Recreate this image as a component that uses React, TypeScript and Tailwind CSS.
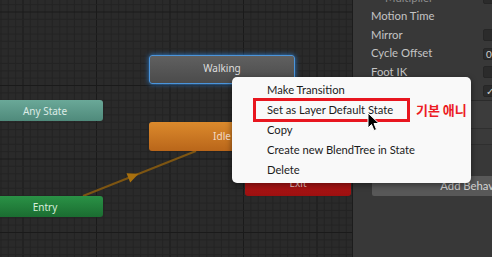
const MINOR = 7.35;

function Grid() {
  const v: JSX.Element[] = [];
  const h: JSX.Element[] = [];
  for (let i = -4; i < 48; i++) {
    const x = 23 + i * MINOR;
    v.push(
      <line key={"v" + i} x1={x} y1={0} x2={x} y2={257} stroke={i % 10 === 0 ? "#1a1a1a" : "#242424"} strokeWidth={1} />
    );
  }
  for (let i = -2; i < 36; i++) {
    const y = 12 + i * MINOR;
    h.push(
      <line key={"h" + i} x1={0} y1={y} x2={353} y2={y} stroke={i % 10 === 0 ? "#1a1a1a" : "#242424"} strokeWidth={1} />
    );
  }
  return (
    <svg className="absolute inset-0" width="353" height="257">
      <rect width="353" height="257" fill="#2a2a2a" />
      {v}
      {h}
      {/* Entry -> Idle transition */}
      <line x1="83" y1="196" x2="196" y2="151" stroke="#7d5512" strokeWidth="2" />
      <polygon points="139,176 128,171 128,181" fill="#a8700e" transform="rotate(-21.7 133 176)" />
    </svg>
  );
}

function StateNode({ label, className, textClass }: { label: string; className: string; textClass: string }) {
  return (
    <div className={`absolute flex items-center justify-center rounded-[3px] ${className}`}>
      <span className={`text-[10px] leading-none ${textClass}`}>{label}</span>
    </div>
  );
}

function Row({ label, children }: { label: string; children?: React.ReactNode }) {
  return (
    <div className="flex h-[18.5px] shrink-0 items-center pl-[18px]">
      <span className="text-[11.3px] text-[#c4c4c4]">{label}</span>
      {children}
    </div>
  );
}

function Box({ children }: { children?: React.ReactNode }) {
  return (
    <div className="ml-auto mr-[-6px] flex h-[12px] w-[15px] items-center pl-[2px] rounded-[2px] border border-[#262626] bg-[#2b2b2b] text-[10px] leading-none text-[#d0d0d0]">
      {children}
    </div>
  );
}

export default function App() {
  return (
    <div
      className="relative flex h-[257px] w-[492px] overflow-hidden bg-[#2a2a2a]"
      style={{ fontFamily: 'Lato, "Noto Sans", sans-serif' }}
    >
      {/* Animator canvas */}
      <div className="relative h-full w-[352px] shrink-0 overflow-hidden" style={{ fontFamily: '"Noto Sans", sans-serif' }}>
        <Grid />
        <StateNode
          label="Walking"
          className="left-[149px] top-[55px] h-[29px] w-[146px] border-[1.5px] border-[#4b95dc] bg-gradient-to-b from-[#606060] to-[#4b4b4b] pb-[4px] shadow-[0_0_5px_#2f7fd0]"
          textClass="text-[#dedede]"
        />
        <StateNode
          label="Any State"
          className="left-[-13px] top-[100px] h-[21px] w-[116px] bg-gradient-to-b from-[#6aa898] to-[#4f8a7b]"
          textClass="text-[#dcebe6]"
        />
        <StateNode
          label="Idle"
          className="left-[149px] top-[122px] h-[29px] w-[146px] bg-gradient-to-b from-[#dc8a2c] to-[#b9661a] pb-[1px]"
          textClass="text-[#f4dcc4]"
        />
        <StateNode
          label="Entry"
          className="left-[-13px] top-[196px] h-[21px] w-[116px] bg-gradient-to-b from-[#2a9246] to-[#1b6d31]"
          textClass="text-[#d8eedc]"
        />
        <div className="absolute left-[245px] top-[168px] flex h-[28px] w-[106px] items-center justify-center rounded-[3px] bg-gradient-to-b from-[#c91c1c] to-[#9c1010]">
          <span className="mt-[2px] text-[10px] leading-none text-[#f0d0d0]">Exit</span>
        </div>
      </div>

      {/* Inspector panel */}
      <div className="flex h-full flex-1 flex-col overflow-hidden border-l border-[#1c1c1c] bg-[#383838]">
        <div className="mt-[-11px] flex flex-col">
          <div className="flex h-[18.5px] shrink-0 items-center pl-[32px]">
            <span className="text-[11.3px] text-[#8c8c8c]">Multiplier</span>
            <Box />
          </div>
          <Row label="Motion Time" />
          <Row label="Mirror">
            <Box />
          </Row>
          <Row label="Cycle Offset">
            <Box>0</Box>
          </Row>
          <Row label="Foot IK">
            <Box />
          </Row>
          <Row label="Write Defaults">
            <Box>✓</Box>
          </Row>
        </div>
        <div className="h-[28px] shrink-0 border-t border-[#2b2b2b] bg-[#3c3c3c]" />
        <div className="h-[16px] shrink-0 border-t border-[#2f2f2f] bg-[#3a3a3a]" />
        <div className="border-t border-[#2f2f2f]" />
        <div className="mt-[31px] flex h-[20px] w-[210px] shrink-0 items-center justify-center ml-[19px] rounded-[2px] bg-[#585858]">
          <span className="text-[11.3px] text-[#d4d4d4]">Add Behaviour</span>
        </div>
      </div>

      {/* Context menu */}
      <div className="absolute left-[232px] top-[77px] flex h-[106px] w-[239px] flex-col rounded-[5px] bg-[#f9f9f9] pt-[3px] shadow-[0_2px_6px_rgba(0,0,0,0.45)]">
        {["Make Transition", "Set as Layer Default State", "Copy", "Create new BlendTree in State", "Delete"].map((t) => (
          <div key={t} className="flex h-[20px] items-center pl-[35px] text-[11.2px] text-[#1b1b1b]">
            {t}
          </div>
        ))}
      </div>

      {/* Annotation */}
      <div className="absolute left-[253px] top-[98px] h-[24px] w-[157px] border-[3px] border-[#e8161f]" />
      <div
        className="absolute left-[416px] top-[101px] text-[13px] font-bold leading-[18px] text-[#ec1c24]"
        style={{ fontFamily: '"Noto Sans CJK KR", sans-serif' }}
      >
        기본 애니
      </div>

      {/* Mouse cursor */}
      <svg className="absolute left-[367px] top-[112px]" width="14" height="21" viewBox="0 0 14 21">
        <path d="M1 1 L1 16 L4.5 12.5 L7 18.5 L9.5 17.5 L7 11.5 L12 11.5 Z" fill="#000" stroke="#fff" strokeWidth="1" />
      </svg>
    </div>
  );
}
